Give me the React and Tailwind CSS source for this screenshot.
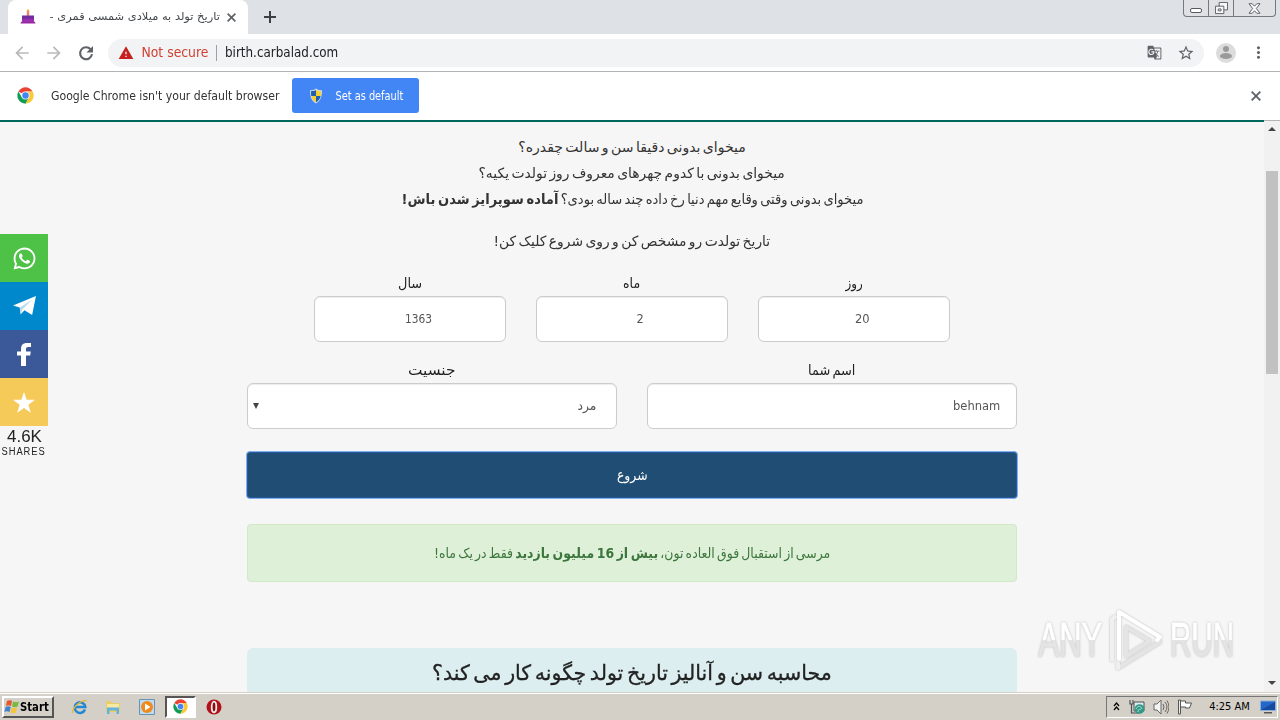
import { useLayoutEffect, useRef, useState } from "react";
import { FaWhatsapp } from "react-icons/fa";
import { MdGTranslate, MdStarBorder, MdArrowBack, MdArrowForward, MdWarning, MdMoreVert } from "react-icons/md";

/* One line of text, squeezed or stretched to a given width. */
function Fit({ w, className = "", children, rtl = false }) {
  const ref = useRef(null);
  const [k, setK] = useState(1);
  useLayoutEffect(() => {
    setK(w / ref.current.offsetWidth);
  }, [w]);
  return (
    <span className="flex shrink-0 justify-center whitespace-nowrap" style={{ width: w }}>
      <span ref={ref} dir={rtl ? "rtl" : "ltr"} className={"inline-block shrink-0 " + className} style={{ transform: `scaleX(${k})` }}>
        {children}
      </span>
    </span>
  );
}

function Cross({ className }) {
  return (
    <svg viewBox="0 0 10 10" className={className} fill="none" stroke="#5f6368" strokeWidth="1.900">
      <path d="m.7.7 8.600 8.600M9.300.7.7 9.300" />
    </svg>
  );
}

function Chrome({ className }) {
  return (
    <svg viewBox="0 0 48 48" className={className}>
      <circle cx="24" cy="24" r="23" fill="#fff" />
      <path d="M24 24 4.1 12.5A23 23 0 0 1 43.9 12.5H24Z" fill="#ea4335" />
      <path d="M4.1 12.5A23 23 0 0 0 24 47l10-17.2L24 24l-10 5.8Z" fill="#0f9d58" />
      <path d="M43.9 12.5A23 23 0 0 1 24 47l10-17.2-10-17.3Z" fill="#fbc934" />
      <circle cx="24" cy="24" r="11.5" fill="#f5f5f5" />
      <circle cx="24" cy="24" r="9" fill="#4285f4" />
    </svg>
  );
}

function Cake() {
  return (
    <svg viewBox="0 0 16 16" className="h-4 w-4">
      <path d="M8 0c1 1 1.600 2 1.200 3H6.800C6.400 2 7 1 8 0Z" fill="#f6a13a" />
      <path d="M6.800 2.500h2.400V7H6.800Z" fill="#f0806f" />
      <path d="M2 6.500h12v5H2Z" fill="#6f2da0" />
      <path d="M2 9c1 2 2 2 3 0 1 2 2 2 3 0 1 2 2 2 3 0 1 2 2 2 3 0v5H2Z" fill="#a12fae" />
      <path d="M.500 13.500h15V15H.500Z" fill="#d88fd0" />
      <path d="M1 12.800h14v1.200H1Z" fill="#8c2fa5" />
    </svg>
  );
}

function Shield() {
  return (
    <svg viewBox="0 0 16 16" className="h-4 w-4">
      <path d="M8 .5c2 1.500 4 1.700 6 1.700 0 6-1 10.300-6 13.300C3 12.500 2 8.200 2 2.200c2 0 4-.2 6-1.700Z" fill="#d5dde2" />
      <path d="M8 2v6H3.200C3 6 3 4.500 3 3.200 5 3.200 6.500 2.800 8 2Z" fill="#1f5fae" />
      <path d="M8 2v6h4.800c.2-1.900.2-3.400.2-4.700-2 0-3.500-.4-5-1.300Z" fill="#f5cf31" />
      <path d="M8 8v6.300c-2.700-1.600-4.200-3.800-4.700-6.300Z" fill="#f5cf31" />
      <path d="M8 8v6.300c2.700-1.600 4.200-3.800 4.700-6.300Z" fill="#1f5fae" />
    </svg>
  );
}

function WindowButtons() {
  return (
    <div className="flex h-[17px] w-[93px] shrink-0 rounded-b-[4px] border border-t-0 border-[#74797f] bg-[#dfe1e5]">
      <div className="flex w-[25px] items-end justify-center border-r border-[#74797f] pb-[3px]">
        <span className="h-[5px] w-3 rounded-[2px] border border-[#555a61] bg-white" />
      </div>
      <div className="flex w-[25px] items-center justify-center border-r border-[#74797f]">
        <svg viewBox="0 0 14 14" className="h-[13px] w-[13px]" fill="#f7f7f8" stroke="#555a61">
          <path d="M4.500.500h9v8h-9Z" />
          <path d="M.500 4.500h9v8h-9Z" />
          <path d="M3.500 7.500h3v2h-3Z" />
        </svg>
      </div>
      <div className="flex flex-1 items-center justify-center">
        <svg viewBox="0 0 14 12" className="h-[11px] w-[13px]" fill="#fafafa" stroke="#555a61">
          <path d="M1 .8h3.500L7 3.500 9.500.8H13L9 6l4 5.200H9.500L7 8.500l-2.500 2.700H1L5 6Z" />
        </svg>
      </div>
    </div>
  );
}

function Field({ label, labelW, box, children }) {
  return (
    <div className={box}>
      <div className="flex h-[26px] items-center justify-center text-[14px] text-[#222]">
        <Fit w={labelW} rtl>{label}</Fit>
      </div>
      <div className="flex h-[46px] items-center rounded-[6px] border border-[#ccc] bg-white text-[13px] text-[#555] shadow-[inset_0_1px_1px_rgba(0,0,0,0.075)]">
        {children}
      </div>
    </div>
  );
}

function Watermark() {
  return (
    <div className="absolute top-[487px] left-[1038px] flex h-[66px] items-center font-['Liberation_Sans_Narrow','Liberation_Sans',sans-serif] text-[48px] leading-[48px] font-normal">
      <div className="[filter:drop-shadow(0_0_1px_#bbb)]">
        <Fit w={64} className="bg-linear-to-b from-white from-50% to-[#e4e4e4] to-50% bg-clip-text text-transparent [-webkit-text-stroke:1px_transparent]">ANY</Fit>
      </div>
      <svg viewBox="0 0 60 66" className="mx-1 h-[66px] w-[60px] [filter:drop-shadow(0_0_1px_#bbb)]" fill="none" strokeWidth="4" strokeLinejoin="round" strokeLinecap="round">
        <path d="M20 49V20l24 14-24 15M12 61l42-26" stroke="#e4e4e4" />
        <path d="M12 61v-5M6 53V12l3-2" stroke="#f0f0f0" />
        <path d="M13 52V5l41 25-3 3" stroke="#fff" />
      </svg>
      <div className="[filter:drop-shadow(0_0_1px_#bbb)]">
        <Fit w={64} className="bg-linear-to-b from-white from-50% to-[#e4e4e4] to-50% bg-clip-text text-transparent [-webkit-text-stroke:1px_transparent]">RUN</Fit>
      </div>
    </div>
  );
}

function Browser() {
  return (
    <>
      <div className="flex h-[34px] shrink-0 items-start bg-[#dee1e6] pl-2">
        <div className="flex h-[34px] w-[240px] shrink-0 items-center rounded-t-lg bg-white pl-3">
          <Cake />
          <div className="ml-[14px] text-[11px] text-[#45494d]">
            <Fit w={170} rtl>تاریخ تولد به میلادی شمسی قمری -</Fit>
          </div>
          <Cross className="ml-[7px] h-[9px] w-[9px]" />
        </div>
        <svg viewBox="0 0 12 12" className="mt-[11px] ml-[16px] h-3 w-3" fill="none" stroke="#3c4043" strokeWidth="2"><path d="M6 0v12M0 6h12" /></svg>
        <div className="flex-1" />
        <WindowButtons />
        <div className="w-1" />
      </div>
      <div className="flex h-[38px] shrink-0 items-center border-b border-[#b3b4b6] bg-white">
        <MdArrowBack className="ml-3 h-5 w-5 text-[#b8babc]" />
        <MdArrowForward className="ml-3 h-5 w-5 text-[#b8babc]" />
        <svg viewBox="0 0 20 20" className="ml-3 h-5 w-5">
          <path d="M14.600 6.300A6 6 0 1 0 16 11.200" fill="none" stroke="#5f6368" strokeWidth="2.100" />
          <path d="M17 3v6.500h-6.500Z" fill="#5f6368" />
        </svg>
        <div className="ml-3 flex h-7 w-[1096px] items-center rounded-full bg-[#f1f3f4] text-[14px] text-[#202124]">
          <MdWarning className="ml-[10px] h-4 w-4 text-[#c5221f]" />
          <div className="ml-[7px] text-[#d23f31]"><Fit w={67}>Not secure</Fit></div>
          <div className="mx-2 h-4 w-px bg-[#9aa0a6]" />
          <Fit w={113}>birth.carbalad.com</Fit>
          <div className="flex-1" />
          <MdGTranslate className="h-[15px] w-[15px] text-[#5f6368]" />
          <MdStarBorder className="mr-[9px] ml-[15px] h-[18px] w-[18px] text-[#5f6368]" />
        </div>
        <svg viewBox="0 0 20 20" className="ml-3 h-5 w-5">
          <circle cx="10" cy="10" r="10" fill="#dcdcdc" />
          <circle cx="10" cy="6" r="3" fill="#9a9a9a" />
          <ellipse cx="10" cy="13" rx="6" ry="3" fill="#9a9a9a" />
        </svg>
        <MdMoreVert className="ml-[13px] h-[19px] w-[19px] text-[#5f6368]" />
      </div>
      <div className="flex h-[48px] shrink-0 items-center bg-white pb-px pl-[17px]">
        <Chrome className="h-[17px] w-[17px]" />
        <div className="ml-[17px] text-[13px] text-[#333]"><Fit w={228}>Google Chrome isn't your default browser</Fit></div>
        <div className="ml-[13px] flex h-[35px] w-[127px] items-center rounded-[3px] bg-[#4285f4] pl-4 text-[12px] text-white">
          <Shield />
          <div className="ml-[11px]"><Fit w={68}>Set as default</Fit></div>
        </div>
        <div className="flex-1" />
        <Cross className="mr-[19px] h-[10px] w-[10px]" />
      </div>
    </>
  );
}

function Share() {
  return (
    <div className="absolute top-[114px] left-0 w-12 text-center text-white">
      <div className="flex h-12 items-center justify-center bg-[#4dc247]"><FaWhatsapp className="h-[25px] w-[25px]" /></div>
      <div className="flex h-12 items-center justify-center bg-[#0088cc]">
        <svg viewBox="0 0 24 22" className="h-[21px] w-[23px]">
          <path d="M0 10 24 0 20 20 12 15 8 19 7 12Z" fill="#fff" />
          <path d="M7 12 20 4 10 14 8 19Z" fill="#b8dcf0" />
        </svg>
      </div>
      <div className="flex h-12 items-center justify-center bg-[#3b5998]">
        <svg viewBox="0 0 14 23" className="h-[23px] w-[14px]"><path d="M4 23V12.500H0v-4h4V6c0-4 2-6 6-6h4v4h-2.500C9.500 4 9 4.800 9 6.300v2.200h4.800l-.6 4H9V23Z" fill="#fff" /></svg>
      </div>
      <div className="flex h-12 items-center justify-center bg-[#f5ca59]">
        <svg viewBox="0 0 22 21" className="h-[21px] w-[22px]"><path d="m11 0 2.700 7.800H22l-6.600 5 2.400 8L11 16l-6.800 4.800 2.400-8L0 7.800h8.300Z" fill="#fff" /></svg>
      </div>
      <div className="flex flex-col items-center pt-[2px] font-['Liberation_Sans',sans-serif] text-[#222]">
        <div className="text-[16px] leading-[17px]"><Fit w={35}>4.6K</Fit></div>
        <div className="pt-px text-[10px] leading-[12px] tracking-[1px]"><Fit w={44}>SHARES</Fit></div>
      </div>
    </div>
  );
}

function Page() {
  return (
    <div className="relative flex h-[572px] shrink-0 overflow-hidden bg-[#f6f6f6]">
      <div className="flex w-[1264px] flex-col items-center border-t-2 border-[#00695c] font-['DejaVu_Sans',sans-serif] text-[14px] text-[#333] [word-spacing:-2px]">
        <div className="flex w-[770px] flex-col items-center pt-[12px] leading-[26px]">
          <Fit w={227} rtl>میخوای بدونی دقیقا سن و سالت چقدره؟</Fit>
          <Fit w={306} rtl>میخوای بدونی با کدوم چهرهای معروف روز تولدت یکیه؟</Fit>
          <Fit w={462} rtl>میخوای بدونی وقتی وقایع مهم دنیا رخ داده چند ساله بودی؟ <b>آماده سوپرایز شدن باش!</b></Fit>
          <div className="h-4" />
          <Fit w={277} rtl>تاریخ تولدت رو مشخص کن و روی شروع کلیک کن!</Fit>
        </div>
        <div dir="rtl" className="mt-4 flex w-[636px] justify-between">
          <Field label="روز" labelW={17} box="w-[192px]"><div className="ml-auto pr-[79px]"><Fit w={15}>20</Fit></div></Field>
          <Field label="ماه" labelW={17} box="w-[192px]"><div className="ml-auto pr-[83px]"><Fit w={7}>2</Fit></div></Field>
          <Field label="سال" labelW={24} box="w-[192px]"><div className="ml-auto pr-[73px]"><Fit w={27}>1363</Fit></div></Field>
        </div>
        <div dir="rtl" className="mt-[15px] flex w-[770px] justify-between">
          <Field label="اسم شما" labelW={47} box="w-[370px]"><div className="pr-4"><Fit w={47}>behnam</Fit></div></Field>
          <Field label="جنسیت" labelW={47} box="w-[370px]">
            <div className="flex w-full items-center justify-between pr-5 pl-[5px]">
              <Fit w={19} rtl>مرد</Fit>
              <svg viewBox="0 0 6 6" className="h-[6px] w-[6px]"><path d="M0 0h6L3 6Z" fill="#444" /></svg>
            </div>
          </Field>
        </div>
        <div className="mt-[22px] flex h-[48px] w-[772px] shrink-0 items-center justify-center rounded-[4px] border border-[#7fb0ee] bg-[#204d74] text-white shadow-[inset_0_0_0_1px_#28589a]">
          <Fit w={31} rtl>شروع</Fit>
        </div>
        <div className="mt-[25px] flex h-[58px] w-[770px] shrink-0 items-center justify-center rounded-[4px] border border-[#d0e9c6] bg-[#dff0d8] text-[#3c763d]">
          <Fit w={396} rtl>مرسی از استقبال فوق العاده تون، <b>بیش از 16 میلیون بازدید</b> فقط در یک ماه!</Fit>
        </div>
        <div className="mt-[66px] flex h-[60px] w-[770px] shrink-0 items-start justify-center rounded-t-[6px] bg-[#dceef0] pt-[10px] text-[21px] leading-[30px] text-[#222] [word-spacing:-3px]">
          <Fit w={400} rtl className="[-webkit-text-stroke:0.3px_#222]">محاسبه سن و آنالیز تاریخ تولد چگونه کار می کند؟</Fit>
        </div>
      </div>
      <div className="flex w-4 flex-col items-center border-t border-[#b3b4b6] bg-[#f1f1f1]">
        <svg viewBox="0 0 8 4" className="mt-[6px] h-1 w-2 shrink-0"><path d="M0 4h8L4 0Z" fill="#444" /></svg>
        <div className="mt-[40px] h-[203px] w-3 shrink-0 bg-[#c1c1c1]" />
        <div className="flex-1" />
        <svg viewBox="0 0 8 4" className="mb-[7px] h-1 w-2 shrink-0"><path d="M0 0h8L4 4Z" fill="#444" /></svg>
      </div>
      <Share />
      <Watermark />
    </div>
  );
}

function Taskbar() {
  return (
    <div className="flex h-7 shrink-0 items-center border-t border-[#d4d0c8] bg-[#d4d0c8] shadow-[inset_0_1px_0_#fff]">
      <div className="ml-[2px] flex h-[22px] w-[52px] items-center border-2 border-t-white border-r-[#555] border-b-[#555] border-l-white text-[12px] font-bold text-black">
        <svg viewBox="0 0 16 16" className="h-4 w-4 shrink-0">
          <path d="M3 2c2-1 4-1 5 0L7 7c-2-1-3-1-5 0Z" fill="#e4572b" />
          <path d="M9 2.500c2 1 4 1 6 0l-1.500 5c-2 1-4 1-5.500 0Z" fill="#79b93d" />
          <path d="M1.700 8c2-1 3.500-1 5 0l-1.200 5c-2-1-3.500-1-5.200 0Z" fill="#3f83d0" />
          <path d="M7.700 8.500c2 1 3.500 1 5.500 0l-1.400 5c-2 1-3.800 1-5.400 0Z" fill="#f4c536" />
        </svg>
        <Fit w={29}>Start</Fit>
      </div>
      <svg viewBox="0 0 16 16" className="ml-[18px] h-4 w-4 shrink-0" fill="none">
        <path d="M13 10.500A5.300 5.300 0 1 1 13.300 8H4" stroke="#2587d2" strokeWidth="2.500" />
        <path d="M1 14C-1 10 9 0 15 2" stroke="#e5b934" strokeWidth="1.300" />
      </svg>
      <svg viewBox="0 0 16 16" className="ml-[17px] h-4 w-4 shrink-0">
        <path d="M1 2h5l1 2h8v9H1Z" fill="#e9cc6b" />
        <path d="M2 5h12v5H2Z" fill="#f7e8a4" />
        <path d="M2 8.500h12V15h-2.500v-3.500h-7V15H2Z" fill="#62b4df" />
      </svg>
      <svg viewBox="0 0 16 16" className="ml-[18px] h-4 w-4 shrink-0">
        <path d="M.500.500h15v15H.500Z" fill="#bddcf2" stroke="#6594b8" />
        <circle cx="8" cy="8" r="6" fill="#f18a1c" />
        <path d="M6 4.500 11.500 8 6 11.500Z" fill="#fff" />
      </svg>
      <div className="ml-[10px] flex h-[22px] w-[31px] items-center justify-center border-2 border-t-[#555] border-r-white border-b-white border-l-[#555] bg-white">
        <Chrome className="h-[15px] w-[15px]" />
      </div>
      <svg viewBox="0 0 16 16" className="ml-[10px] h-4 w-4 shrink-0">
        <circle cx="8" cy="8" r="7.500" fill="#b01217" />
        <ellipse cx="8" cy="8" rx="2.300" ry="5.300" fill="#8f0b0e" stroke="#eee" strokeWidth="1.800" />
      </svg>
      <div className="flex-1" />
      <div className="mr-[2px] flex h-[22px] w-[172px] items-center border border-t-[#777] border-r-white border-b-white border-l-[#777] text-[11px] text-black">
        <svg viewBox="0 0 7 9" className="ml-[6px] h-[9px] w-[7px] shrink-0" fill="none" stroke="#000" strokeWidth="1.200"><path d="m1 4 2.500-3L6 4M1 8l2.500-3L6 8" /></svg>
        <svg viewBox="0 0 16 16" className="ml-[9px] h-4 w-4 shrink-0">
          <path d="M5 3h10v9H5Z" fill="#dcebed" stroke="#4b5054" />
          <path d="M1 1v4h3V1M2.500 5v9H10" fill="none" stroke="#4b5054" strokeWidth="1.200" />
          <circle cx="10.500" cy="10" r="4.800" fill="#329887" />
          <path d="M7 10c2-4 5-3 6 0M9 13c0-3 2-3 3-2" fill="none" stroke="#b1e4d4" />
        </svg>
        <svg viewBox="0 0 16 16" className="ml-2 h-4 w-4 shrink-0" fill="none" stroke="#666">
          <path d="M1 5h3l4-4v14l-4-4H1Z" fill="#f4f4f4" />
          <path d="M10 5q2 3 0 6M12 3q4 5 0 10M14 1.500q4 6.500 0 13" />
        </svg>
        <svg viewBox="0 0 16 16" className="ml-2 h-4 w-4 shrink-0" stroke="#555">
          <path d="M1.500 1v14h2V1Z" fill="#eee" />
          <path d="M3.500 2h5v2h6l-2 5h-4V8h-5Z" fill="#fff" />
        </svg>
        <div className="ml-4 pt-px"><Fit w={41}>4:25 AM</Fit></div>
        <svg viewBox="0 0 16 14" className="ml-[10px] h-[14px] w-4 shrink-0">
          <path d="M.500 1h15v9.500H.500Z" fill="#2567c8" stroke="#88afd8" />
          <path d="M1 10 15 2v8Z" fill="#174a9e" />
          <path d="M4 12h8v1.500H4Z" fill="#555" />
        </svg>
      </div>
    </div>
  );
}

export default function App() {
  return (
    <div className="flex h-[720px] w-[1280px] flex-col overflow-hidden font-['DejaVu_Sans_Condensed','DejaVu_Sans',sans-serif]">
      <Browser />
      <Page />
      <Taskbar />
    </div>
  );
}
